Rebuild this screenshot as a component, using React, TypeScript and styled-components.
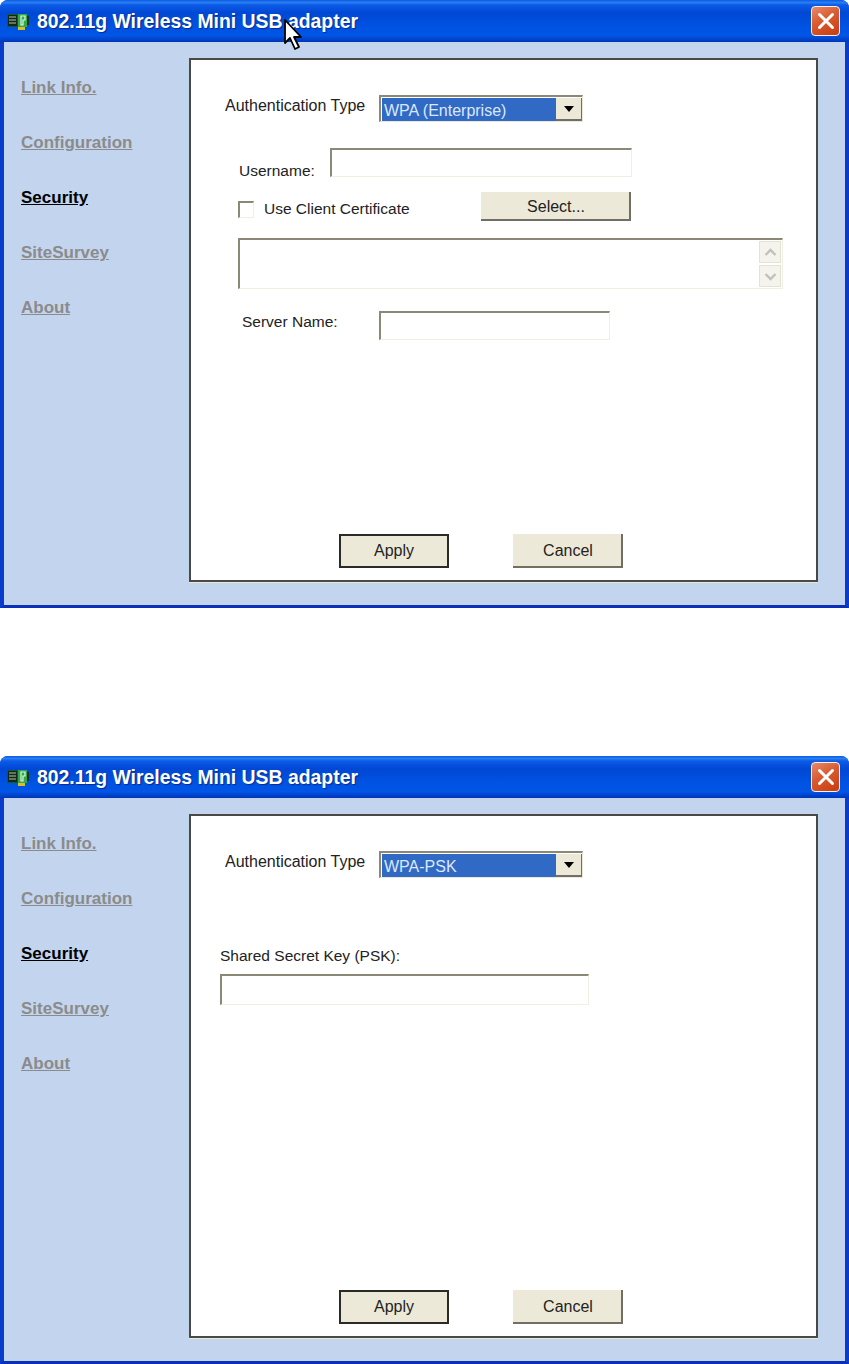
import React from 'react'
import styled, { createGlobalStyle } from 'styled-components'

const GlobalStyle = createGlobalStyle`
  html, body {
    margin: 0;
    padding: 0;
    background: #fff;
  }
  body {
    font-family: 'Liberation Sans', Arial, sans-serif;
    color: #1c1c1c;
  }
`

const NAV_ITEMS = ['Link Info.', 'Configuration', 'Security', 'SiteSurvey', 'About']

function AdapterIcon() {
  return (
    <AdapterSvg width="22" height="16" viewBox="0 0 22 16">
      <rect x="0" y="0" width="20" height="13" fill="#0c5f28" />
      <rect x="1" y="1" width="9" height="11" fill="#16261c" />
      <path d="M2 3h7M2 6h7M2 9h7" stroke="#a8c89a" strokeWidth="1" />
      <rect x="11" y="0" width="9" height="13" fill="#2fa84e" />
      <path d="M14 2h4v4h-2v5h-2z" fill="none" stroke="#e6f5e6" strokeWidth="1.200" />
      <rect x="20" y="2" width="2" height="9" fill="#17341e" />
      <rect x="11" y="13" width="7" height="3" fill="#d8c02c" />
    </AdapterSvg>
  )
}

function CloseGlyph() {
  return (
    <svg width="18" height="18" viewBox="0 0 18 18">
      <path d="M2.500 2.500l13 13M15.500 2.500l-13 13" stroke="#fff" strokeWidth="3" strokeLinecap="round" />
    </svg>
  )
}

function Cursor() {
  return (
    <svg width="20" height="33" viewBox="0 0 20 33">
      <path
        d="M1 1v23l5-5 5 11 4-2-5-10h7z"
        fill="#fff"
        stroke="#000"
        strokeWidth="1.800"
        strokeLinejoin="round"
      />
    </svg>
  )
}

function Chevron({ up }: { up?: boolean }) {
  return (
    <svg width="13" height="9" viewBox="0 0 13 9">
      <path d={up ? 'M1.500 7l5-5 5 5' : 'M1.500 2l5 5 5-5'} fill="none" stroke="#c2c1b6" strokeWidth="2.400" />
    </svg>
  )
}

function AuthRow({ value }: { value: string }) {
  return (
    <FieldRow $left={34} $top={35}>
      <AuthLabel>Authentication Type</AuthLabel>
      <SelectBox>
        <SelectValue>{value}</SelectValue>
        <SelectArrow>
          <svg width="10" height="6" viewBox="0 0 10 6">
            <path d="M0 0h10L5 6z" fill="#000" />
          </svg>
        </SelectArrow>
      </SelectBox>
    </FieldRow>
  )
}

function Dialog({ children, showCursor }: { children: React.ReactNode; showCursor?: boolean }) {
  return (
    <Window>
      <TitleBar>
        <AdapterIcon />
        <TitleText>802.11g Wireless Mini USB adapter</TitleText>
        <CloseButton>
          <CloseGlyph />
        </CloseButton>
      </TitleBar>
      <Body>
        <Sidebar>
          {NAV_ITEMS.map((item) => (
            <NavLink key={item} $active={item === 'Security'}>
              {item}
            </NavLink>
          ))}
        </Sidebar>
        <Panel>
          {children}
          <Footer>
            <ActionButton $primary>Apply</ActionButton>
            <ActionButton>Cancel</ActionButton>
          </Footer>
        </Panel>
      </Body>
      {showCursor && (
        <CursorSpot>
          <Cursor />
        </CursorSpot>
      )}
    </Window>
  )
}

export default function App() {
  return (
    <>
      <GlobalStyle />
      <Page>
        <Dialog showCursor>
          <AuthRow value="WPA (Enterprise)" />
          <FieldRow $left={48} $top={26}>
            <FieldLabel $width={91} $shift={8}>Username:</FieldLabel>
            <TextInput $width={302} $height={29} />
          </FieldRow>
          <FieldRow $left={47} $top={15}>
            <CheckGroup>
              <CheckBox />
              <CheckText>Use Client Certificate</CheckText>
            </CheckGroup>
            <ActionButton $wide>Select...</ActionButton>
          </FieldRow>
          <FieldRow $left={47} $top={17}>
            <TextArea>
              <ScrollColumn>
                <ScrollButton>
                  <Chevron up />
                </ScrollButton>
                <ScrollButton>
                  <Chevron />
                </ScrollButton>
              </ScrollColumn>
            </TextArea>
          </FieldRow>
          <FieldRow $left={51} $top={22}>
            <FieldLabel $width={137} $shift={-4}>Server Name:</FieldLabel>
            <TextInput $width={231} $height={29} />
          </FieldRow>
        </Dialog>
        <Dialog>
          <AuthRow value="WPA-PSK" />
          <FieldRow $left={29} $top={69}>
            <FieldLabel $width={300} $shift={0}>Shared Secret Key (PSK):</FieldLabel>
          </FieldRow>
          <FieldRow $left={29} $top={9}>
            <TextInput $width={369} $height={31} />
          </FieldRow>
        </Dialog>
      </Page>
    </>
  )
}

const Page = styled.div`
  width: 849px;
  display: flex;
  flex-direction: column;
  gap: 148px;
`

const Window = styled.section`
  position: relative;
  width: 849px;
  height: 608px;
  display: flex;
  flex-direction: column;
  border-radius: 8px 8px 0 0;
  overflow: hidden;
  background: #0a46d8;
`

const TitleBar = styled.header`
  height: 42px;
  flex-shrink: 0;
  display: flex;
  align-items: center;
  padding: 0 9px 0 7px;
  box-sizing: border-box;
  background: linear-gradient(
    180deg,
    #0a5ae6 0%,
    #2a7ff0 6%,
    #0c5be8 12%,
    #0048d4 30%,
    #0052e2 62%,
    #0056e6 85%,
    #0034b8 100%
  );
`

const AdapterSvg = styled.svg`
  margin-top: 2px;
  flex-shrink: 0;
`

const TitleText = styled.h1`
  margin: 0 0 0 8px;
  flex: 1;
  font-family: 'Liberation Sans', Arial, sans-serif;
  font-size: 19.400px;
  font-weight: 700;
  color: #fff;
  white-space: nowrap;
  text-shadow: 1px 1px 1px #0a2a90;
`

const CloseButton = styled.button`
  width: 29px;
  height: 30px;
  padding: 0;
  display: flex;
  align-items: center;
  justify-content: center;
  border: 1px solid #f4f1ee;
  border-radius: 4px;
  background: linear-gradient(150deg, #e88a68 0%, #d85a30 45%, #c93c0e 100%);
`

const Body = styled.div`
  flex: 1;
  display: flex;
  padding-top: 16px;
  background: #c3d5ee;
  border-style: solid;
  border-width: 0 4px 3px;
  border-color: #0a50e6 #0a3ccc #0a2fb8;
`

const Sidebar = styled.nav`
  width: 185px;
  flex-shrink: 0;
  display: flex;
  flex-direction: column;
  gap: 34px;
  padding: 19px 0 0 17px;
  box-sizing: border-box;
`

const NavLink = styled.a<{ $active?: boolean }>`
  height: 21px;
  line-height: 21px;
  font-family: 'Liberation Sans', Arial, sans-serif;
  font-size: 17px;
  font-weight: 700;
  text-decoration: underline;
  color: ${(p) => (p.$active ? '#000' : '#8b8b8b')};
`

const Panel = styled.main`
  width: 629px;
  height: 524px;
  box-sizing: border-box;
  display: flex;
  flex-direction: column;
  background: #fff;
  border: 2px solid #4a4a44;
  box-shadow: 0 1px 0 #ece9d8;
`

const FieldRow = styled.div<{ $left: number; $top: number }>`
  display: flex;
  align-items: center;
  padding-left: ${(p) => p.$left}px;
  margin-top: ${(p) => p.$top}px;
`

const FieldLabel = styled.label<{ $width: number; $shift: number }>`
  width: ${(p) => p.$width}px;
  flex-shrink: 0;
  font-size: 15.500px;
  line-height: 18px;
  color: #222;
  transform: translateY(${(p) => p.$shift}px);
`

const AuthLabel = styled(FieldLabel).attrs({ $width: 154, $shift: -3 })`
  font-size: 16px;
`

const SelectBox = styled.div`
  width: 204px;
  height: 27px;
  box-sizing: border-box;
  display: flex;
  padding: 1px 0 0 1px;
  border-style: solid;
  border-width: 2px 1px 1px 2px;
  border-color: #8b8878 #ece9d8 #ece9d8 #8b8878;
`

const SelectValue = styled.div`
  flex: 1;
  padding-left: 2px;
  background: #316ac5;
  color: #dbe8fb;
  font-size: 16px;
  line-height: 25px;
`

const SelectArrow = styled.div`
  width: 26px;
  display: flex;
  align-items: center;
  justify-content: center;
  background: #ece9d8;
  border-bottom: 2px solid #716f64;
  border-right: 1px solid #716f64;
  box-sizing: border-box;
`

const TextInput = styled.div<{ $width: number; $height: number }>`
  width: ${(p) => p.$width}px;
  height: ${(p) => p.$height}px;
  box-sizing: border-box;
  background: #fff;
  border-style: solid;
  border-width: 2px 1px 1px 2px;
  border-color: #8b8878 #f1efe2 #f1efe2 #8b8878;
`

const CheckGroup = styled.div`
  width: 243px;
  display: flex;
  align-items: center;
  padding-top: 5px;
  box-sizing: border-box;
`

const CheckBox = styled.span`
  width: 16px;
  height: 17px;
  box-sizing: border-box;
  border-style: solid;
  border-width: 2px 1px 1px 2px;
  border-color: #8b8878 #f1efe2 #f1efe2 #8b8878;
`

const CheckText = styled.span`
  margin-left: 10px;
  font-size: 15.500px;
  color: #222;
`

const TextArea = styled.div`
  width: 545px;
  height: 51px;
  box-sizing: border-box;
  display: flex;
  justify-content: flex-end;
  padding: 1px;
  border-style: solid;
  border-width: 2px 1px 1px 2px;
  border-color: #8b8878 #f1efe2 #f1efe2 #8b8878;
`

const ScrollColumn = styled.div`
  width: 22px;
  display: flex;
  flex-direction: column;
  gap: 2px;
`

const ScrollButton = styled.div`
  flex: 1;
  display: flex;
  align-items: center;
  justify-content: center;
  background: #f5f4ec;
  border: 1px solid #e4e2d6;
`

const Footer = styled.footer`
  margin-top: auto;
  display: flex;
  gap: 64px;
  padding: 0 0 12px 148px;
`

const ActionButton = styled.button<{ $primary?: boolean; $wide?: boolean }>`
  width: ${(p) => (p.$wide ? 150 : 110)}px;
  height: ${(p) => (p.$wide ? 29 : 34)}px;
  padding: ${(p) => (p.$primary ? '0' : '2px 0 0 2px')};
  box-sizing: border-box;
  font-family: 'Liberation Sans', Arial, sans-serif;
  font-size: 16px;
  color: #222;
  background: #ece9d8;
  border-style: solid;
  ${(p) =>
    p.$primary
      ? `border-width: 2px; border-color: #2a2a26;`
      : `border-width: 0 2px 2px 0; border-color: #716f64;`}
`

const CursorSpot = styled.div`
  position: absolute;
  left: 284px;
  top: 19px;
  line-height: 0;
`
